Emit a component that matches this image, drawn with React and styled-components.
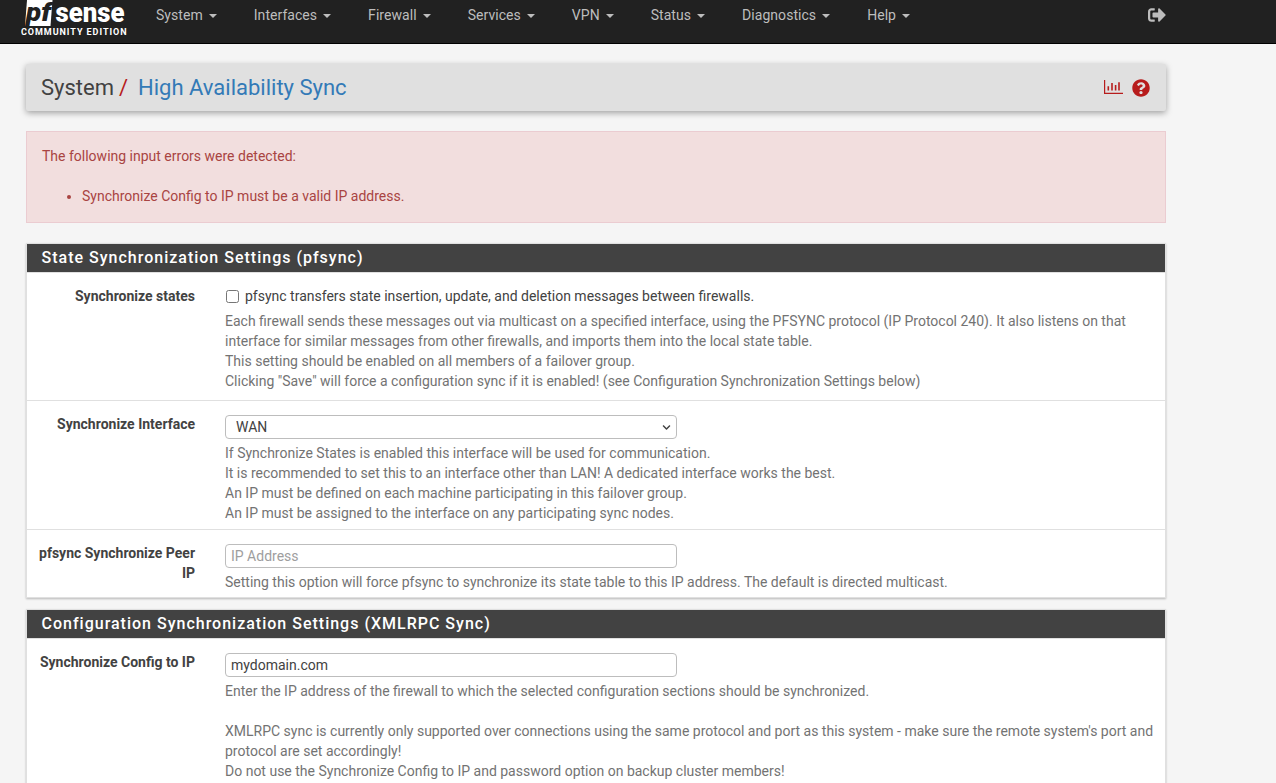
import React from "react";
import styled, { createGlobalStyle } from "styled-components";
import { FaSignOutAlt, FaQuestionCircle, FaChevronDown } from "react-icons/fa";

const GlobalStyle = createGlobalStyle`
  html, body {
    margin: 0;
    padding: 0;
    height: 783px;
    overflow: hidden;
    background: #f5f5f5;
    font-family: Roboto, "Liberation Sans", sans-serif;
    font-size: 14px;
    line-height: 20px;
    color: #424242;
  }
  * { box-sizing: border-box; }
`;

const Navbar = styled.nav`
  height: 44px;
  background: #212121;
  border-bottom: 1px solid #000;
  display: flex;
  align-items: flex-start;
`;
const Brand = styled.svg`
  display: block;
  width: 116.5px;
  height: 43px;
  margin-left: 21px;
  flex: none;
`;
const LogoPf = styled.text`
  fill: #212121;
  font: italic 900 26px Roboto, sans-serif;
`;
const LogoWord = styled.text`
  fill: #fff;
  font: 900 27px Roboto, sans-serif;
`;
const LogoSub = styled.text`
  fill: #fff;
  font: 700 9px Roboto, sans-serif;
`;
const NavMenu = styled.ul`
  list-style: none;
  margin: 0;
  padding: 0;
  display: flex;
  flex: 1;
`;
const NavItem = styled.li`
  padding: 5px 18.5px;
  font-size: 14px;
  line-height: 20px;
  letter-spacing: 0.05px;
  color: #bdbdbd;
  white-space: nowrap;
`;
const Caret = styled.span`
  display: inline-block;
  width: 0;
  height: 0;
  margin-left: 6px;
  vertical-align: middle;
  border-top: 4px solid #bdbdbd;
  border-left: 4px solid transparent;
  border-right: 4px solid transparent;
`;
const Logout = styled.div`
  width: 129px;
  padding-top: 6px;
  padding-left: 1px;
  color: #bdbdbd;
  font-size: 18px;
  line-height: 18px;
  flex: none;
`;

const Container = styled.main`
  width: 1140px;
  margin-left: 26px;
  padding-top: 20px;
`;
const PageHeader = styled.header`
  height: 47px;
  background: #e0e0e0;
  border-radius: 2px;
  box-shadow: 0 2px 6px rgba(0, 0, 0, 0.35);
  display: flex;
  align-items: center;
  justify-content: space-between;
  padding: 0 16px 0 15px;
  margin-bottom: 20px;
`;
const Crumbs = styled.h1`
  margin: 0;
  font-size: 22px;
  font-weight: 400;
  line-height: 26px;
  color: #424242;
`;
const Slash = styled.span`
  color: #b71c1c;
  margin: 0 5px;
`;
const CrumbLink = styled.span`
  color: #337ab7;
  margin-left: 5px;
`;
const HeaderIcons = styled.div`
  display: flex;
  align-items: center;
  gap: 9px;
  color: #b71c1c;
`;
const Alert = styled.div`
  height: 92px;
  background: #f2dede;
  border: 1px solid #ebccd1;
  color: #a94442;
  padding: 14px 15px;
  margin-bottom: 20px;
`;
const AlertList = styled.ul`
  margin: 20px 0 0;
  padding-left: 40px;
`;
const Panel = styled.section`
  background: #fff;
  box-shadow: 0 1px 2px rgba(0, 0, 0, 0.25);
  border: 1px solid #e0e0e0;
  border-bottom: 0;
  margin-bottom: 11px;
`;
const PanelHeading = styled.h2`
  margin: 0;
  height: 29px;
  background: #424242;
  border-bottom: 1px solid #e0e0e0;
  color: #fff;
  padding: 0 14.5px;
  font-size: 16px;
  font-weight: 500;
  line-height: 28px;
  letter-spacing: 1px;
`;
const Row = styled.div`
  display: grid;
  grid-template-columns: 156px 1fr;
  column-gap: 30px;
  padding: 14px 10px 10px 12px;
  border-bottom: 1px solid #e0e0e0;
  height: ${(p) => p.$h}px;
`;
const Label = styled.label`
  font-weight: 700;
  color: #424242;
  text-align: right;
  font-size: 14px;
  line-height: 20px;
  margin-top: -1px;
`;
const Field = styled.div`
  min-width: 0;
`;
const CheckLine = styled.label`
  display: flex;
  align-items: center;
  gap: 6px;
  margin-top: -1px;
  color: #424242;
`;
const Check = styled.input`
  width: 13px;
  height: 13px;
  margin: 0 0 0 1px;
  appearance: none;
  border: 1px solid #767676;
  border-radius: 2.5px;
  background: #fff;
`;
const Help = styled.div`
  color: #737373;
  margin-top: ${(p) => p.$top}px;
`;
const TextInput = styled.input`
  display: block;
  width: 452px;
  height: 24px;
  border: 1px solid #bdbdbd;
  border-radius: 4px;
  padding: 0 5px;
  font: 14px/20px Roboto, sans-serif;
  color: #424242;
  background: #fff;
  &::placeholder {
    color: #9e9e9e;
    opacity: 1;
  }
`;
const SelectWrap = styled.div`
  position: relative;
  width: 452px;
  height: 24px;
`;
const Select = styled.select`
  display: block;
  width: 100%;
  height: 100%;
  appearance: none;
  border: 1px solid #bdbdbd;
  border-radius: 4px;
  padding: 0 0 0 10px;
  font: 14px/20px Roboto, sans-serif;
  color: #424242;
  background: #fff;
`;
const SelectArrow = styled.span`
  position: absolute;
  right: 6px;
  top: 4px;
  color: #424242;
  font-size: 9px;
  pointer-events: none;
`;

const menus = [
  "System",
  "Interfaces",
  "Firewall",
  "Services",
  "VPN",
  "Status",
  "Diagnostics",
  "Help",
];

function Logo() {
  return (
    <Brand viewBox="0 0 116.5 43">
      <polygon points="6,0 31.5,0 29.5,26 4,26" fill="#fff" />
      <LogoPf x="5" y="21" textLength="25" lengthAdjust="spacingAndGlyphs">pf</LogoPf>
      <LogoWord x="34.5" y="21.5" textLength="69" lengthAdjust="spacingAndGlyphs">sense</LogoWord>
      <LogoSub x="0" y="35" textLength="105.5">COMMUNITY EDITION</LogoSub>
    </Brand>
  );
}

function ChartIcon() {
  return (
    <svg width="19" height="15" viewBox="0 0 19 15" fill="none" stroke="#b71c1c" strokeWidth="1.2">
      <path d="M.6 0v13.4h18.4" />
      <path d="M4.3 10.5V6.3M8 10.5V3M11.6 10.5V5M15 10.5V2.3" strokeWidth="1.6" />
    </svg>
  );
}

export default function App() {
  return (
    <>
      <GlobalStyle />
      <Navbar>
        <Logo />
        <NavMenu>
          {menus.map((m) => (
            <NavItem key={m}>
              {m}
              <Caret />
            </NavItem>
          ))}
        </NavMenu>
        <Logout>
          <FaSignOutAlt />
        </Logout>
      </Navbar>
      <Container>
        <PageHeader>
          <Crumbs>
            System
            <Slash>/</Slash>
            <CrumbLink>High Availability Sync</CrumbLink>
          </Crumbs>
          <HeaderIcons>
            <ChartIcon />
            <FaQuestionCircle size={18} />
          </HeaderIcons>
        </PageHeader>
        <Alert>
          The following input errors were detected:
          <AlertList>
            <li>Synchronize Config to IP must be a valid IP address.</li>
          </AlertList>
        </Alert>
        <Panel>
          <PanelHeading>State Synchronization Settings (pfsync)</PanelHeading>
          <Row $h={128}>
            <Label>Synchronize states</Label>
            <Field>
              <CheckLine>
                <Check type="checkbox" />
                pfsync transfers state insertion, update, and deletion messages between firewalls.
              </CheckLine>
              <Help $top={5}>
                Each firewall sends these messages out via multicast on a specified interface, using the PFSYNC protocol (IP Protocol 240). It also listens on that interface for similar messages from other firewalls, and imports them into the local state table.
                <br />
                This setting should be enabled on all members of a failover group.
                <br />
                Clicking "Save" will force a configuration sync if it is enabled! (see Configuration Synchronization Settings below)
              </Help>
            </Field>
          </Row>
          <Row $h={129}>
            <Label>Synchronize Interface</Label>
            <Field>
              <SelectWrap>
                <Select defaultValue="WAN">
                  <option>WAN</option>
                  <option>LAN</option>
                </Select>
                <SelectArrow>
                  <FaChevronDown />
                </SelectArrow>
              </SelectWrap>
              <Help $top={4}>
                If Synchronize States is enabled this interface will be used for communication.
                <br />
                It is recommended to set this to an interface other than LAN! A dedicated interface works the best.
                <br />
                An IP must be defined on each machine participating in this failover group.
                <br />
                An IP must be assigned to the interface on any participating sync nodes.
              </Help>
            </Field>
          </Row>
          <Row $h={68}>
            <Label>pfsync Synchronize Peer IP</Label>
            <Field>
              <TextInput placeholder="IP Address" />
              <Help $top={4}>
                Setting this option will force pfsync to synchronize its state table to this IP address. The default is directed multicast.
              </Help>
            </Field>
          </Row>
        </Panel>
        <Panel>
          <PanelHeading>Configuration Synchronization Settings (XMLRPC Sync)</PanelHeading>
          <Row $h={200}>
            <Label>Synchronize Config to IP</Label>
            <Field>
              <TextInput defaultValue="mydomain.com" />
              <Help $top={4}>
                Enter the IP address of the firewall to which the selected configuration sections should be synchronized.
                <br />
                <br />
                XMLRPC sync is currently only supported over connections using the same protocol and port as this system - make sure the remote system's port and protocol are set accordingly!
                <br />
                Do not use the Synchronize Config to IP and password option on backup cluster members!
              </Help>
            </Field>
          </Row>
        </Panel>
      </Container>
    </>
  );
}
